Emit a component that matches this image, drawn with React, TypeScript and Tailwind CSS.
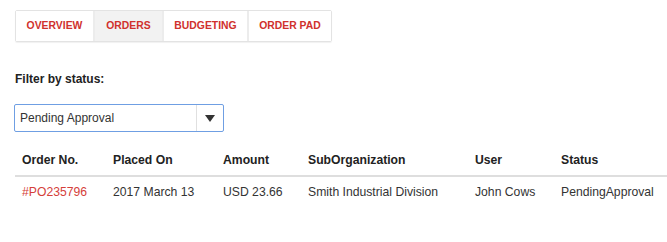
import React from 'react';

const tabs = [
  { label: 'OVERVIEW', w: 'w-[77px]', active: false },
  { label: 'ORDERS', w: 'w-[69px]', active: true },
  { label: 'BUDGETING', w: 'w-[85px]', active: false },
  { label: 'ORDER PAD', w: 'w-[84px]', active: false },
];

const columns = ['Order No.', 'Placed On', 'Amount', 'SubOrganization', 'User', 'Status'];

const orders = [
  {
    id: '#PO235796',
    placedOn: '2017 March 13',
    amount: 'USD 23.66',
    subOrg: 'Smith Industrial Division',
    user: 'John Cows',
    status: 'PendingApproval',
  },
];

const gridCols = 'grid grid-cols-[91px_110px_85px_167px_86px_1fr]';

const App: React.FC = () => {
  return (
    <div className="w-[667px] h-[242px] overflow-hidden bg-white font-['Liberation_Sans',Arial,sans-serif] text-[#333]">
      <div className="pl-[15px] pt-[10px]">
        {/* Tabs */}
        <div className="flex w-fit h-[32px] border border-[#e3e3e3] rounded-[2px] shadow-[0_1px_1px_rgba(0,0,0,0.06)]">
          {tabs.map((t, i) => (
            <div
              key={t.label}
              className={`${t.w} flex items-center justify-center text-[10.4px] font-bold text-[#d0312d] ${
                i > 0 ? 'border-l-2 border-[#ececec]' : ''
              } ${t.active ? 'bg-[#f2f2f2]' : 'bg-white'}`}
            >
              {t.label}
            </div>
          ))}
        </div>

        {/* Filter */}
        <div className="mt-[29px] text-[12px] font-bold leading-[16px] text-[#222]">Filter by status:</div>
        <div className="mt-[17px] -ml-px flex w-[210px] h-[28px] border border-[#6f9fe3] rounded-[2px] bg-white">
          <div className="flex-1 flex items-center pl-[5px] text-[12px] text-[#333]">Pending Approval</div>
          <div className="w-[27px] flex items-center justify-center border-l border-[#e0e0e0]">
            <svg width="10" height="7" viewBox="0 0 10 7">
              <path d="M0 0 L10 0 L5 7 Z" fill="#333" />
            </svg>
          </div>
        </div>
      </div>

      {/* Orders table */}
      <div className="ml-[15px] mt-[16px] text-[12.2px]">
        <div className={`${gridCols} h-[29px] items-center pb-[2px] border-b-2 border-[#dedede] font-bold text-[#222]`}>
          {columns.map((c) => (
            <div key={c} className="pl-[7px] whitespace-nowrap">
              {c}
            </div>
          ))}
        </div>
        {orders.map((o) => (
          <div key={o.id} className={`${gridCols} h-[31px] items-center`}>
            <div className="pl-[7px] text-[#d5403a]">{o.id}</div>
            <div className="pl-[7px]">{o.placedOn}</div>
            <div className="pl-[7px]">{o.amount}</div>
            <div className="pl-[7px]">{o.subOrg}</div>
            <div className="pl-[7px]">{o.user}</div>
            <div className="pl-[7px]">{o.status}</div>
          </div>
        ))}
      </div>
    </div>
  );
};

export default App;
